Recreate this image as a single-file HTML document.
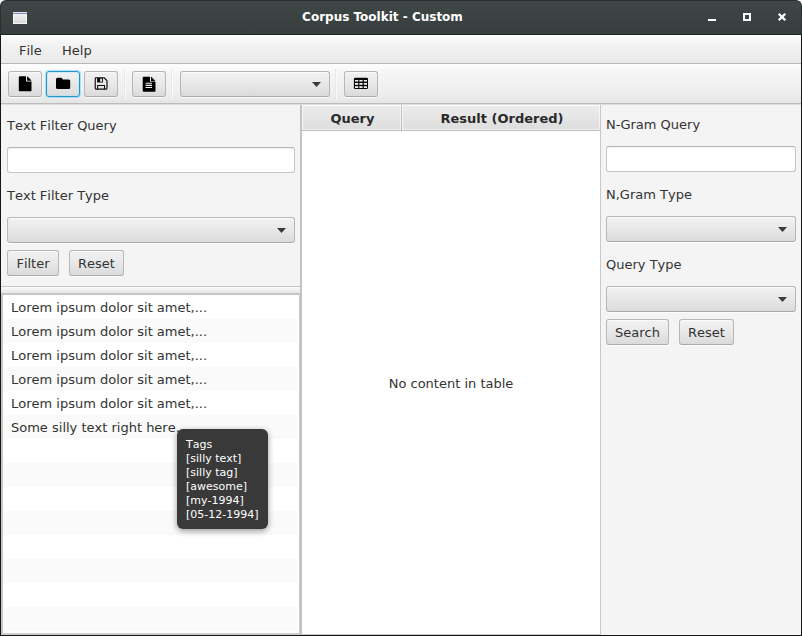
<!DOCTYPE html>
<html>
<head>
<meta charset="utf-8">
<title>Corpus Toolkit - Custom</title>
<style>
*{box-sizing:border-box;margin:0;padding:0}
html,body{width:802px;height:636px;overflow:hidden;background:#f4f4f4}
body{position:relative;font-family:"DejaVu Sans","Liberation Sans",sans-serif;font-size:13px;color:#333;font-kerning:none;font-variant-ligatures:none}
.abs{position:absolute}
#blackbg{left:0;top:0;width:802px;height:10px;background:#fff}
#titlebar{left:0;top:0;width:802px;height:35px;background:linear-gradient(#404747,#3b4242 50%,#383e3e);border-radius:6px 6px 0 0;border:1px solid #2a2f2f;border-bottom:1px solid #1d2222}
#title{left:0;top:0;width:802px;height:34px;line-height:34px;text-align:center;color:#fff;font-weight:bold;font-size:12px;padding-right:37px;font-kerning:normal}
#winborder{left:0;top:35px;width:802px;height:601px;border:1px solid #161616;border-top:none;pointer-events:none}
#menubar{left:1px;top:35px;width:800px;height:28px;background:linear-gradient(#fdfdfd,#f3f3f3 30%,#e8e9e8)}
#menubar span{position:absolute;top:0;line-height:31px}
#toolbar{left:1px;top:63px;width:800px;height:42px;background:linear-gradient(#fdfdfd,#f5f5f5 25%,#efefef 70%,#e6e6e6);border-top:1px solid #b6b8b6;border-bottom:1px solid #bcbcbc;height:41px;box-shadow:0 1px 0 #dedede}
.btn{position:absolute;border:1px solid #b7b7b7;border-radius:3px;background:linear-gradient(#f2f2f2,#e8e8e8 50%,#dbdbdb);box-shadow:inset 0 1px 0 #fbfbfb, 0 1px 0 rgba(255,255,255,.8);text-align:center;border-bottom-color:#a9a9a9}
.tb{top:71px;height:26px;width:34px}
.focus{border-color:#2a94c2;box-shadow:0 0 0 1px rgba(110,215,255,.6), inset 0 0 0 1px rgba(160,230,255,.45)}
.combo svg{left:auto;right:7.900px;top:10.100px}
.tf{position:absolute;height:26px;border:1px solid #c6c6c6;border-top-color:#b4b4b4;border-radius:3px;background:#fff;box-shadow:inset 0 1px 1px rgba(0,0,0,.05)}
.lbl{position:absolute;white-space:nowrap;line-height:16px}
.sep{position:absolute;top:69px;height:30px;width:1px;background:#e8e8e8;box-shadow:1px 0 0 #fafafa}
#list{left:1px;top:293px;width:299px;height:342px;background:#fff;border:2px solid #c6c6c6;border-right:1px solid #c8c8c8;border-bottom:2px solid #cdcdcd;overflow:hidden}
#list div{height:24px;line-height:25px;padding-left:8px;white-space:nowrap;margin-right:2px}
#list div:nth-child(even){background:#fafafa}
#table{left:300px;top:105px;width:301px;height:530px;background:#fff;border:1px solid #c8c8c8;border-left:2px solid #c4c4c4;border-top:none}
#thead{left:302px;top:105px;width:298px;height:26px;background:linear-gradient(#ededed,#e5e5e5 50%,#dddddd);border-bottom:1px solid #bdbdbd}
.th{position:absolute;top:105px;height:25px;line-height:27px;text-align:center;font-weight:bold;border-right:1px solid #bebebe;color:#2a2a2a;padding-left:2px;box-shadow:inset 1px 1px 0 rgba(255,255,255,.7),inset -1px -1px 0 rgba(255,255,255,.6)}
#tooltip{left:177px;top:429px;width:91px;height:100px;background:#393939;border-radius:6px;color:#fff;font-size:11px;line-height:14px;padding:9px 0 0 9px;box-shadow:0 2px 6px rgba(0,0,0,.4);white-space:nowrap}
svg{position:absolute;left:0;top:0}
</style>
</head>
<body>
<div class="abs" id="blackbg"></div>
<div class="abs" id="titlebar"></div>
<div class="abs" id="title">Corpus Toolkit - Custom</div>
<svg width="802" height="36" viewBox="0 0 802 36">
<defs><linearGradient id="ig" x1="0" y1="0" x2="0" y2="1"><stop offset="0" stop-color="#f4f6f4"/><stop offset="1" stop-color="#d6dad6"/></linearGradient></defs><rect x="13.500" y="12.500" width="13" height="11" fill="url(#ig)" stroke="#f4f6f6"/><rect x="13" y="12" width="14" height="1" fill="#dfe4ee"/><rect x="13" y="13" width="14" height="1" fill="#7f8fb4"/>
<rect x="708" y="19" width="8" height="2" fill="#fff"/>
<rect x="744" y="14" width="6" height="6" fill="none" stroke="#fff" stroke-width="2"/>
<path d="M778.700 13.700l6.600 6.600M785.300 13.700l-6.600 6.600" stroke="#fff" stroke-width="2.300" fill="none"/>
</svg>

<div class="abs" id="menubar"><span style="left:18px">File</span><span style="left:61px">Help</span></div>
<div class="abs" id="toolbar"></div>

<div class="btn tb" style="left:8px"></div>
<div class="btn tb focus" style="left:46px"></div>
<div class="btn tb" style="left:84px"></div>
<div class="sep" style="left:124px"></div>
<div class="btn tb" style="left:132px"></div>
<div class="sep" style="left:171px"></div>
<div class="btn combo" style="left:180px;top:71px;width:150px;height:26px"><svg width="9" height="5" viewBox="0 0 9 5"><path d="M0 0h9l-4.500 5z" fill="#3a3a3a"/></svg></div>
<div class="sep" style="left:335px"></div>
<div class="btn tb" style="left:344px"></div>
<svg id="icons" width="400" height="104" viewBox="0 0 400 104">
<!-- file -->
<path d="M18.800 77.200q0-.9.900-.9h6.300v4.400q0 .9.900.9h4.600v8.800q0 .9-.9.900h-10.900q-.9 0-.9-.9z M27.100 76.400q.5.100 1 .6l2.700 2.700q.5.500.6 1h-4.300z" fill="#000"/>
<!-- folder -->
<path d="M56 79.300q0-1.500 1.500-1.500h3.600q1.500 0 1.500 1.500v.3h6.100q1.500 0 1.500 1.500v6.500q0 1.500-1.500 1.500h-11.200q-1.500 0-1.500-1.500z" fill="#000"/>
<!-- save -->
<path d="M95.250 78.500q0-.75.750-.75h8.100l2.900 2.900v7.700q0 .75-.75.750h-10.250q-.75 0-.75-.75z" fill="none" stroke="#0c0c0c" stroke-width="1.150" stroke-linejoin="round"/>
<path d="M97.100 78h5.900v4.500h-5.900z" fill="#0c0c0c"/>
<rect x="100.200" y="78.700" width="1.900" height="3" fill="#efefef"/>
<path d="M97.650 89.300v-3.900h6.900v3.900" fill="none" stroke="#0c0c0c" stroke-width="1.050"/>
<!-- file text -->
<path transform="translate(0,0.350)" d="M142.700 77.200q0-.9.900-.9h6.400v4.300q0 .9.900.9h4.600v8.900q0 .9-.9.900h-11q-.9 0-.9-.9z M151 76.500q.5.100 1 .6l2.700 2.700q.5.500.6 1h-4.300z" fill="#000"/>
<path d="M145.600 83.300h6.400M145.600 85.400h6.400M145.600 87.500h6.400" stroke="#f4f4f4" stroke-width="1.100"/>
<!-- table -->
<rect x="353.900" y="77.700" width="14.100" height="11.300" rx="1.200" fill="#080808"/>
<path d="M355.00 79.90h3.2v1.7h-3.2zM359.35 79.90h3.2v1.7h-3.2zM363.80 79.90h3.2v1.7h-3.2zM355.00 83.10h3.2v1.7h-3.2zM359.35 83.10h3.2v1.7h-3.2zM363.80 83.10h3.2v1.7h-3.2zM355.00 86.30h3.2v1.7h-3.2zM359.35 86.30h3.2v1.7h-3.2zM363.80 86.30h3.2v1.7h-3.2z" fill="#f2f2f2"/>
</svg>

<!-- left panel -->
<div class="lbl" style="left:7px;top:118px">Text Filter Query</div>
<div class="tf" style="left:7px;top:147px;width:288px"></div>
<div class="lbl" style="left:7px;top:188px">Text Filter Type</div>
<div class="btn combo" style="left:7px;top:217px;width:288px;height:26px"><svg width="9" height="5" viewBox="0 0 9 5"><path d="M0 0h9l-4.500 5z" fill="#3a3a3a"/></svg></div>
<div class="btn" style="left:7px;top:250px;width:52px;height:26px;line-height:25px">Filter</div>
<div class="btn" style="left:69px;top:250px;width:55px;height:26px;line-height:25px">Reset</div>
<div class="abs" style="left:1px;top:286px;width:299px;height:7px;border-top:1px solid #c6c6c6;background:linear-gradient(#fbfbfb,#e6e6e6)"></div>

<div class="abs" id="list">
<div>Lorem ipsum dolor sit amet,...</div>
<div>Lorem ipsum dolor sit amet,...</div>
<div>Lorem ipsum dolor sit amet,...</div>
<div>Lorem ipsum dolor sit amet,...</div>
<div>Lorem ipsum dolor sit amet,...</div>
<div>Some silly text right here.</div>
<div></div><div></div><div></div><div></div><div></div><div></div><div></div><div></div><div></div>
</div>

<!-- table -->
<div class="abs" id="table"></div>
<div class="abs" id="thead"></div>
<div class="th" style="left:302px;width:100px">Query</div>
<div class="th" style="left:402px;width:198px;border-right:none">Result (Ordered)</div>
<div class="lbl" style="left:302px;top:376px;width:298px;text-align:center">No content in table</div>

<!-- right panel -->
<div class="lbl" style="left:606px;top:117px">N-Gram Query</div>
<div class="tf" style="left:606px;top:146px;width:190px"></div>
<div class="lbl" style="left:606px;top:187px">N,Gram Type</div>
<div class="btn combo" style="left:606px;top:216px;width:190px;height:26px"><svg width="9" height="5" viewBox="0 0 9 5"><path d="M0 0h9l-4.500 5z" fill="#3a3a3a"/></svg></div>
<div class="lbl" style="left:606px;top:257px">Query Type</div>
<div class="btn combo" style="left:606px;top:286px;width:190px;height:26px"><svg width="9" height="5" viewBox="0 0 9 5"><path d="M0 0h9l-4.500 5z" fill="#3a3a3a"/></svg></div>
<div class="btn" style="left:606px;top:319px;width:63px;height:26px;line-height:25px">Search</div>
<div class="btn" style="left:679px;top:319px;width:55px;height:26px;line-height:25px">Reset</div>

<div class="abs" id="tooltip">Tags<br>[silly text]<br>[silly tag]<br>[awesome]<br>[my-1994]<br>[05-12-1994]</div>
<div class="abs" id="winborder"></div>
</body>
</html>
